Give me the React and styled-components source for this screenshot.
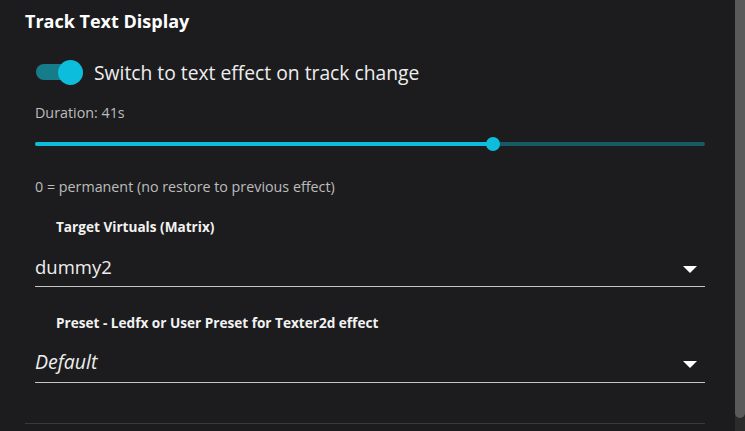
import React, { useState } from "react";
import styled, { createGlobalStyle } from "styled-components";

const GlobalStyle = createGlobalStyle`
  body {
    margin: 0;
    background: #1c1c1e;
    font-family: "Open Sans", "Noto Sans", sans-serif;
    color: #fff;
    overflow: hidden;
  }
`;

const Layout = styled.div`
  display: flex;
  height: 431px;
`;

const Page = styled.div`
  flex: 1;
  padding: 0 30px 0 25px;
  box-sizing: border-box;
`;

const ScrollTrack = styled.div`
  width: 10px;
  background: #2b2b2b;
`;

const ScrollThumb = styled.div`
  height: 418px;
  border-radius: 0 0 5px 5px;
  background: #5a5a5a;
`;

const Title = styled.h2`
  margin: 0;
  padding-top: 8px;
  line-height: 26px;
  font-size: 18px;
  font-weight: 700;
  color: #fff;
`;

const Body = styled.div`
  padding-left: 10px;
`;

const SwitchRow = styled.label`
  display: flex;
  align-items: center;
  height: 40px;
  margin-top: 18px;
  gap: 14px;
  cursor: pointer;
`;

const SwitchTrack = styled.span`
  position: relative;
  display: inline-block;
  width: 44px;
  height: 16px;
  margin-left: 1px;
  border-radius: 8px;
  background: ${(p) => (p.$on ? "#177c8a" : "#555")};
`;

const SwitchThumb = styled.span`
  position: absolute;
  top: 50%;
  left: ${(p) => (p.$on ? "22px" : "-2px")};
  width: 25px;
  height: 25px;
  margin-top: -12.5px;
  border-radius: 50%;
  background: ${(p) => (p.$on ? "#0dbedc" : "#ccc")};
`;

const SwitchText = styled.span`
  font-size: 19.3px;
  color: #eee;
`;

const SmallText = styled.div`
  margin-top: ${(p) => p.$mt || 0}px;
  line-height: 18px;
  font-size: 14.3px;
  color: #bdbdbd;
`;

const SliderBox = styled.div`
  position: relative;
  height: 44px;
`;

const Rail = styled.div`
  position: absolute;
  left: 0;
  right: 0;
  top: 20px;
  height: 4px;
  border-radius: 2px;
  background: #165a66;
`;

const Fill = styled.div`
  position: absolute;
  left: 0;
  top: 20px;
  height: 4px;
  border-radius: 2px;
  background: #0dbedc;
`;

const Thumb = styled.div`
  position: absolute;
  top: 22px;
  width: 14px;
  height: 14px;
  margin: -7px 0 0 -7px;
  border-radius: 50%;
  background: #0dbedc;
`;

const FieldLabel = styled.div`
  margin-top: ${(p) => p.$mt}px;
  padding-left: 21px;
  line-height: 18px;
  font-size: 13.6px;
  font-weight: 700;
  color: #f2f2f2;
`;

const Select = styled.div`
  display: flex;
  align-items: center;
  justify-content: space-between;
  padding: ${(p) => p.$pt}px 0 ${(p) => p.$pb}px;
  border-bottom: 1px solid #c4c4c4;
`;

const SelectValue = styled.span`
  line-height: 24px;
  font-size: ${(p) => (p.$italic ? 19.5 : 18.5)}px;
  font-style: ${(p) => (p.$italic ? "italic" : "normal")};
  color: #eee;
`;

const Arrow = styled.svg`
  width: 14px;
  height: 7px;
  margin: 4px 8px 0 0;
`;

const Divider = styled.div`
  margin-top: 40px;
  height: 1px;
  background: #3a3a3a;
`;

const DropArrow = () => (
  <Arrow viewBox="0 0 14 7">
    <polygon points="0,0 14,0 7,7" fill="#fff" />
  </Arrow>
);

export default function App() {
  const [on, setOn] = useState(true);
  const pct = (493 - 35) / (705 - 35);

  return (
    <Layout>
      <GlobalStyle />
      <Page>
        <Title>Track Text Display</Title>
        <Body>
          <SwitchRow onClick={() => setOn(!on)}>
            <SwitchTrack $on={on}>
              <SwitchThumb $on={on} />
            </SwitchTrack>
            <SwitchText>Switch to text effect on track change</SwitchText>
          </SwitchRow>
          <SmallText $mt={12}>Duration: 41s</SmallText>
          <SliderBox>
            <Rail />
            <Fill style={{ width: `${pct * 100}%` }} />
            <Thumb style={{ left: `${pct * 100}%` }} />
          </SliderBox>
          <SmallText $mt={12}>0 = permanent (no restore to previous effect)</SmallText>
          <FieldLabel $mt={22}>Target Virtuals (Matrix)</FieldLabel>
          <Select $pt={19} $pb={7}>
            <SelectValue>dummy2</SelectValue>
            <DropArrow />
          </Select>
          <FieldLabel $mt={27}>Preset - Ledfx or User Preset for Texter2d effect</FieldLabel>
          <Select $pt={18} $pb={8}>
            <SelectValue $italic>Default</SelectValue>
            <DropArrow />
          </Select>
        </Body>
        <Divider />
      </Page>
      <ScrollTrack>
        <ScrollThumb />
      </ScrollTrack>
    </Layout>
  );
}
